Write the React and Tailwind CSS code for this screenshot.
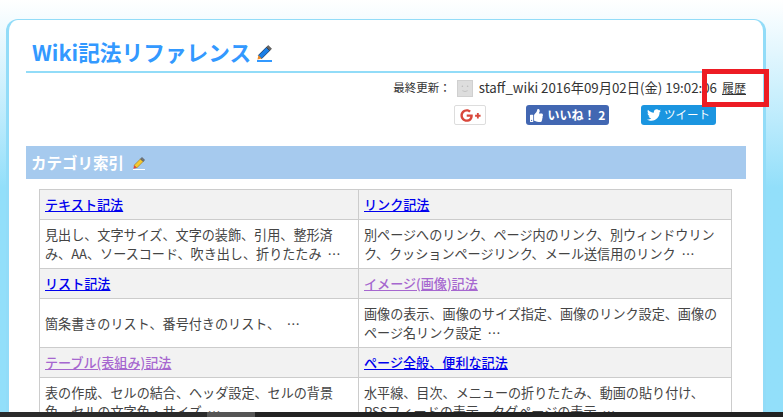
import { FaThumbsUp, FaTwitter, FaGooglePlusG } from "react-icons/fa";

function Pencil({ blue }) {
  return (
    <svg viewBox="0 0 16 16" className={blue ? "block w-[15px] h-[15px]" : "block w-[12px] h-[12px]"}>
      <path d="M1.5 11 L10 2.5 L13.5 6 L5 14.5 Z" fill={blue ? "#1a7fe8" : "#f6c92e"} stroke={blue ? "#08284f" : "#9a7412"} strokeWidth="0.8" />
      <path d="M10 2.5 L12 0.5 L15.5 4 L13.5 6 Z" fill={blue ? "#666" : "#777"} stroke="#222" strokeWidth="0.5" />
      <path d="M1.5 11 L5 14.5 L0.5 15.5 Z" fill={blue ? "#f08a24" : "#e0483a"} />
    </svg>
  );
}

function Head({ children, visited }) {
  return (
    <td className="border border-[#ccc] bg-[#f2f2f2] px-[5px] h-[30px] font-medium">
      <a href="#" className={visited ? "underline text-[#a667cf]" : "underline text-[#0000ee]"}>{children}</a>
    </td>
  );
}

function Body({ children }) {
  return <td className="border border-[#ccc] bg-white px-[5px] h-[49px] leading-[19px] text-[#444]">{children}</td>;
}

export default function App() {
  return (
    <div className="relative h-[417px] w-[783px] overflow-hidden bg-gradient-to-b from-white to-[#92dffa] to-[45%] pt-[19px] pl-[6px] font-['Noto_Sans_CJK_JP','Liberation_Sans',sans-serif]">
      <div className="w-[760px] h-[500px] rounded-t-[12px] border-t border-x-[3px] border-[#92dcf8] bg-white px-[17px] pt-[18px]">
        <div className="border-b-2 border-[#92dcf8] pl-[6px] h-[35px] pb-[5px] flex items-center gap-[6px]">
          <h1 className="text-[21.7px] font-bold text-[#3399ff] leading-none">Wiki記法リファレンス</h1>
          <span className="border-b-2 border-[#3399ff] mt-[3px]"><Pencil blue /></span>
        </div>
        <div className="flex justify-end items-center text-[#333] mt-[5px] h-[20px]">
          <span className="text-[11.5px]">最終更新：</span>
          <span className="ml-[6px] w-[16px] h-[17px] bg-[#ddd] border border-[#d0d0d0] flex items-center justify-center">
            <svg viewBox="0 0 16 17" className="w-[14px] h-[15px]">
              <circle cx="5" cy="6" r="0.9" fill="#bbb" />
              <circle cx="11" cy="6" r="0.9" fill="#bbb" />
              <path d="M5 11 Q8 13 11 11" fill="none" stroke="#bbb" strokeWidth="0.9" />
            </svg>
          </span>
          <span className="ml-[6px] text-[13.3px]">staff_wiki 2016年09月02日(金) 19:02:06</span>
          <a href="#" className="ml-[5px] text-[12px] underline">履歴</a>
        </div>
        <div className="flex justify-end items-center mt-[7px] h-[20px] pr-[30px]">
          <span className="flex items-center justify-center w-[32px] h-[20px] bg-white border border-[#ddd] rounded-[2px] text-[#d9473b] text-[21px]"><FaGooglePlusG /></span>
          <span className="ml-[40px] flex items-center justify-center gap-[5px] w-[83px] h-[20px] bg-[#4267b2] rounded-[3px] text-white text-[12px] font-bold">
            <FaThumbsUp className="text-[13px]" />いいね！ 2
          </span>
          <span className="ml-[32px] flex items-center justify-center gap-[3px] w-[75px] h-[20px] bg-[#1b95e0] rounded-[3px] text-white text-[11.5px]">
            <FaTwitter className="text-[14px]" />ツイート
          </span>
        </div>
        <div className="mt-[21px] h-[33px] bg-[#a6caee] pl-[5px] flex items-center gap-[9px]">
          <h2 className="text-[15.5px] font-bold text-white leading-none">カテゴリ索引</h2>
          <span className="border-b border-white mt-[2px]"><Pencil /></span>
        </div>
        <table className="mt-[10px] ml-[13px] w-[692px] table-fixed border-collapse text-[13.1px]">
          <colgroup>
            <col className="w-[319px]" />
            <col className="w-[373px]" />
          </colgroup>
          <tbody>
            <tr>
              <Head>テキスト記法</Head>
              <Head>リンク記法</Head>
            </tr>
            <tr>
              <Body>見出し、文字サイズ、文字の装飾、引用、整形済<br />み、AA、ソースコード、吹き出し、折りたたみ &nbsp;…</Body>
              <Body>別ページへのリンク、ページ内のリンク、別ウィンドウリン<br />ク、クッションページリンク、メール送信用のリンク &nbsp;…</Body>
            </tr>
            <tr>
              <Head>リスト記法</Head>
              <Head visited>イメージ(画像)記法</Head>
            </tr>
            <tr>
              <Body>箇条書きのリスト、番号付きのリスト、　…</Body>
              <Body>画像の表示、画像のサイズ指定、画像のリンク設定、画像の<br />ページ名リンク設定 &nbsp;…</Body>
            </tr>
            <tr>
              <Head visited>テーブル(表組み)記法</Head>
              <Head>ページ全般、便利な記法</Head>
            </tr>
            <tr>
              <Body>表の作成、セルの結合、ヘッダ設定、セルの背景<br />色、セルの文字色・サイズ &nbsp;…</Body>
              <Body>水平線、目次、メニューの折りたたみ、動画の貼り付け、<br />RSSフィードの表示、タグページの表示 &nbsp;…</Body>
            </tr>
          </tbody>
        </table>
      </div>
      {/* annotation box drawn over the page */}
      <div className="absolute left-[702px] top-[69px] w-[67px] h-[38px] border-[5px] border-[#ed1c24]"></div>
      {/* dark strip at the bottom edge */}
      <div className="absolute left-0 bottom-0 w-full h-[5px] flex bg-[#222]">
        <div className="w-[207px] bg-[#2b2b2b]"></div>
        <div className="w-[48px] bg-[#555]"></div>
      </div>
    </div>
  );
}
